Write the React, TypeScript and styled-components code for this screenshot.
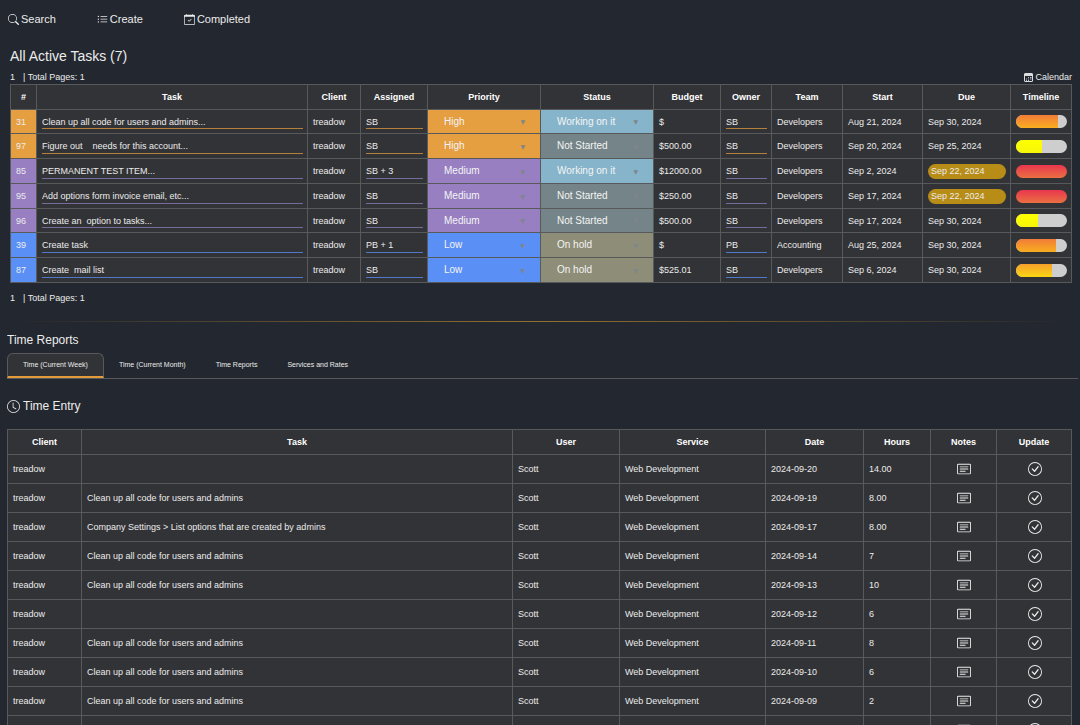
import React from "react";
import styled, { createGlobalStyle } from "styled-components";
import {
  BsCalendarCheck,
  BsCardText,
  BsCheckCircle,
  BsClock,
  BsListUl,
  BsSearch,
} from "react-icons/bs";

const color = {
  page: "#23272f",
  cell: "#323336",
  line: "#58595b",
  text: "#ececec",
  accent: "#e39b3b",
};

const tones = {
  high: { fill: "#e59e40", rule: "#b5813a" },
  medium: { fill: "#977fc1", rule: "#776b9c" },
  low: { fill: "#5a8ff5", rule: "#5078c8" },
};

const statusFill: Record<string, string> = {
  "Working on it": "#86b4cb",
  "Not Started": "#758488",
  "On hold": "#8d8d78",
};

const GlobalStyle = createGlobalStyle`
  *, *::before, *::after { box-sizing: border-box; }
  body {
    margin: 0;
    background: ${color.page};
    color: ${color.text};
    font: 9px/12px "Liberation Sans", Arial, sans-serif;
  }
  button, input, select { font: inherit; color: inherit; }
`;

const Toolbar = styled.nav`
  display: flex;
  gap: 41px;
  padding: 12px 8px;
`;

const ToolButton = styled.button`
  display: flex;
  align-items: center;
  gap: 2px;
  padding: 0;
  border: 0;
  background: none;
  font-size: 11px;
  line-height: 15px;
  svg { width: 11px; height: 11px; }
`;

const TasksSection = styled.section`
  padding: 8px 8px 0 10px;
`;

const PageTitle = styled.h1`
  margin: 0;
  font-size: 14px;
  font-weight: 400;
  line-height: 18px;
`;

const TableMeta = styled.div`
  display: flex;
  justify-content: space-between;
  padding: 6px 0 1px;
`;

const Pager = styled.div`
  display: flex;
  gap: 8px;
`;

const CalendarLink = styled.a`
  display: flex;
  align-items: center;
  gap: 2px;
  color: inherit;
  text-decoration: none;
  svg { width: 9px; height: 9px; }
`;

const FooterPager = styled(Pager)`
  padding-top: 9px;
`;

const Table = styled.table`
  width: 100%;
  table-layout: fixed;
  border-collapse: collapse;
  background: ${color.cell};
`;

const Column = styled.col<{ $width?: number }>`
  width: ${(p) => (p.$width ? `${p.$width}px` : "auto")};
`;

const HeadCell = styled.th`
  height: 25px;
  padding: 0;
  border: 1px solid ${color.line};
  color: #fff;
  font-weight: 700;
`;

const Cell = styled.td<{ $fill?: string; $flush?: boolean; $center?: boolean }>`
  padding: ${(p) => (p.$flush ? "0" : "0 4px 0 5px")};
  border: 1px solid ${color.line};
  background: ${(p) => p.$fill ?? "transparent"};
  text-align: ${(p) => (p.$center ? "center" : "left")};
  white-space: nowrap;
`;

const TaskRow = styled.tr`
  height: 25px;
  &:nth-child(4n + 1) { height: 24px; }
`;

const EntryRow = styled.tr`
  height: 29px;
`;

const LineInput = styled.input<{ $rule: string }>`
  display: block;
  width: 100%;
  height: 15px;
  padding: 1px 0 0;
  border: 0;
  border-bottom: 1px solid ${(p) => p.$rule};
  border-radius: 0;
  background: none;
  outline: none;
`;

const SelectBox = styled.div`
  position: relative;
  &::after {
    content: "▼";
    position: absolute;
    top: 0;
    right: 15px;
    color: #7f858c;
    font: 6px/24px "DejaVu Sans", sans-serif;
    pointer-events: none;
  }
`;

const Select = styled.select`
  display: block;
  width: 100%;
  height: 23px;
  padding: 0 16px;
  border: 0;
  background: none;
  color: #f4f4f4;
  font-size: 10px;
  appearance: none;
  option { background: ${color.cell}; }
`;

const DueTag = styled.span`
  display: block;
  padding: 0 3px;
  border-radius: 8px;
  background: #b78c17;
  line-height: 15px;
`;

const Track = styled.div`
  height: 13px;
  border-radius: 7px;
  overflow: hidden;
  background: #cecece;
`;

const Fill = styled.div<{ $from: string; $to: string }>`
  height: 100%;
  background: linear-gradient(${(p) => p.$from}, ${(p) => p.$to});
`;

const Divider = styled.hr`
  height: 1px;
  margin: 17px 8px 0;
  border: 0;
  background: linear-gradient(90deg, transparent, #94702f, transparent);
`;

const ReportsSection = styled.section`
  padding: 10px 2px 0 7px;
`;

const SectionTitle = styled.h2`
  display: flex;
  align-items: center;
  gap: 3px;
  margin: 0;
  font-size: 12px;
  font-weight: 400;
  line-height: 16px;
  svg { width: 13px; height: 13px; }
`;

const TabList = styled.div`
  display: flex;
  margin-top: 5px;
  border-bottom: 1px solid ${color.line};
`;

const Tab = styled.button<{ $active?: boolean }>`
  height: 25px;
  padding: ${(p) => (p.$active ? "0 15px" : "0 14px 2px")};
  border: 1px solid ${(p) => (p.$active ? color.line : "transparent")};
  border-bottom: ${(p) => (p.$active ? `2px solid ${color.accent}` : "0")};
  border-radius: 6px 6px 0 0;
  background: ${(p) => (p.$active ? color.cell : "none")};
  font-size: 7px;
`;

const EntryPanel = styled.div`
  padding: 19px 6px 0 0;
`;

const EntryTable = styled(Table)`
  margin-top: 15px;
`;

const IconButton = styled.button`
  display: inline-flex;
  padding: 0;
  border: 0;
  background: none;
  vertical-align: middle;
  svg { width: 14px; height: 14px; }
`;

type Tone = keyof typeof tones;

interface Task {
  id: number;
  name: string;
  assigned: string;
  priority: string;
  tone: Tone;
  status: string;
  budget: string;
  owner: string;
  team: string;
  start: string;
  due: string;
  late?: boolean;
  progress: number;
  ramp: [string, string];
}

const orange: [string, string] = ["#f27c38", "#f8ae20"];
const amber: [string, string] = ["#f5a02a", "#fcd714"];
const yellow: [string, string] = ["#ffff00", "#f6f60a"];
const red: [string, string] = ["#e9364f", "#ea7041"];

const tasks: Task[] = [
  { id: 31, name: "Clean up all code for users and admins...", assigned: "SB", priority: "High", tone: "high", status: "Working on it", budget: "$", owner: "SB", team: "Developers", start: "Aug 21, 2024", due: "Sep 30, 2024", progress: 82, ramp: orange },
  { id: 97, name: "Figure out    needs for this account...", assigned: "SB", priority: "High", tone: "high", status: "Not Started", budget: "$500.00", owner: "SB", team: "Developers", start: "Sep 20, 2024", due: "Sep 25, 2024", progress: 50, ramp: yellow },
  { id: 85, name: "PERMANENT TEST ITEM...", assigned: "SB + 3", priority: "Medium", tone: "medium", status: "Working on it", budget: "$12000.00", owner: "SB", team: "Developers", start: "Sep 2, 2024", due: "Sep 22, 2024", late: true, progress: 100, ramp: red },
  { id: 95, name: "Add options form invoice email, etc...", assigned: "SB", priority: "Medium", tone: "medium", status: "Not Started", budget: "$250.00", owner: "SB", team: "Developers", start: "Sep 17, 2024", due: "Sep 22, 2024", late: true, progress: 100, ramp: red },
  { id: 96, name: "Create an  option to tasks...", assigned: "SB", priority: "Medium", tone: "medium", status: "Not Started", budget: "$500.00", owner: "SB", team: "Developers", start: "Sep 17, 2024", due: "Sep 30, 2024", progress: 43, ramp: yellow },
  { id: 39, name: "Create task", assigned: "PB + 1", priority: "Low", tone: "low", status: "On hold", budget: "$", owner: "PB", team: "Accounting", start: "Aug 25, 2024", due: "Sep 30, 2024", progress: 79, ramp: orange },
  { id: 87, name: "Create  mail list", assigned: "SB", priority: "Low", tone: "low", status: "On hold", budget: "$525.01", owner: "SB", team: "Developers", start: "Sep 6, 2024", due: "Sep 30, 2024", progress: 70, ramp: amber },
];

const cleanUp = "Clean up all code for users and admins";

const entries = [
  { task: "", date: "2024-09-20", hours: "14.00" },
  { task: cleanUp, date: "2024-09-19", hours: "8.00" },
  { task: "Company Settings > List options that are created by admins", date: "2024-09-17", hours: "8.00" },
  { task: cleanUp, date: "2024-09-14", hours: "7" },
  { task: cleanUp, date: "2024-09-13", hours: "10" },
  { task: "", date: "2024-09-12", hours: "6" },
  { task: cleanUp, date: "2024-09-11", hours: "8" },
  { task: cleanUp, date: "2024-09-10", hours: "6" },
  { task: cleanUp, date: "2024-09-09", hours: "2" },
];

const taskColumns: [string, number?][] = [
  ["#", 26], ["Task"], ["Client", 53], ["Assigned", 67], ["Priority", 113], ["Status", 113],
  ["Budget", 67], ["Owner", 51], ["Team", 71], ["Start", 80], ["Due", 88], ["Timeline", 61],
];

const entryColumns: [string, number?][] = [
  ["Client", 74], ["Task"], ["User", 107], ["Service", 146], ["Date", 98], ["Hours", 67], ["Notes", 66], ["Update", 75],
];

function CalendarIcon() {
  return (
    <svg viewBox="0 0 18 18" fill="none" aria-hidden="true">
      <rect x="1" y="1" width="16" height="16" rx="1" stroke="#dcdcdc" strokeWidth="2" />
      <path d="M1 4h16" stroke="#dcdcdc" strokeWidth="4" />
      <path d="M8 9h2M12 9h3M4 12h2M8 12h2M12 12h3M4 15h2M8 15h2" stroke="#b9bcc6" strokeWidth="2" />
    </svg>
  );
}

function TableHead({ columns }: { columns: [string, number?][] }) {
  return (
    <>
      <colgroup>
        {columns.map(([label, width]) => (
          <Column key={label} $width={width} />
        ))}
      </colgroup>
      <thead>
        <tr>
          {columns.map(([label]) => (
            <HeadCell key={label} scope="col">{label}</HeadCell>
          ))}
        </tr>
      </thead>
    </>
  );
}

function Choice({ label, value, options }: { label: string; value: string; options: string[] }) {
  return (
    <SelectBox>
      <Select aria-label={label} defaultValue={value}>
        {options.map((option) => (
          <option key={option}>{option}</option>
        ))}
      </Select>
    </SelectBox>
  );
}

function TaskLine({ task }: { task: Task }) {
  const { fill, rule } = tones[task.tone];
  return (
    <TaskRow>
      <Cell $fill={fill}>{task.id}</Cell>
      <Cell><LineInput $rule={rule} aria-label={`Task ${task.id}`} defaultValue={task.name} /></Cell>
      <Cell>treadow</Cell>
      <Cell><LineInput $rule={rule} aria-label={`Assigned to task ${task.id}`} defaultValue={task.assigned} /></Cell>
      <Cell $fill={fill} $flush>
        <Choice label={`Priority of task ${task.id}`} value={task.priority} options={["High", "Medium", "Low"]} />
      </Cell>
      <Cell $fill={statusFill[task.status]} $flush>
        <Choice label={`Status of task ${task.id}`} value={task.status} options={Object.keys(statusFill)} />
      </Cell>
      <Cell>{task.budget}</Cell>
      <Cell><LineInput $rule={rule} aria-label={`Owner of task ${task.id}`} defaultValue={task.owner} /></Cell>
      <Cell>{task.team}</Cell>
      <Cell>{task.start}</Cell>
      <Cell>{task.late ? <DueTag>{task.due}</DueTag> : task.due}</Cell>
      <Cell>
        <Track role="progressbar" aria-label={`Timeline of task ${task.id}`} aria-valuenow={task.progress}>
          <Fill $from={task.ramp[0]} $to={task.ramp[1]} style={{ width: `${task.progress}%` }} />
        </Track>
      </Cell>
    </TaskRow>
  );
}

export default function App() {
  return (
    <>
      <GlobalStyle />
      <Toolbar>
        <ToolButton type="button"><BsSearch />Search</ToolButton>
        <ToolButton type="button"><BsListUl />Create</ToolButton>
        <ToolButton type="button"><BsCalendarCheck />Completed</ToolButton>
      </Toolbar>
      <main>
        <TasksSection>
          <PageTitle>All Active Tasks (7)</PageTitle>
          <TableMeta>
            <Pager><span>1</span><span>| Total Pages: 1</span></Pager>
            <CalendarLink href="#calendar"><CalendarIcon />Calendar</CalendarLink>
          </TableMeta>
          <Table>
            <TableHead columns={taskColumns} />
            <tbody>
              {tasks.map((task) => (
                <TaskLine key={task.id} task={task} />
              ))}
            </tbody>
          </Table>
          <FooterPager><span>1</span><span>| Total Pages: 1</span></FooterPager>
        </TasksSection>
        <Divider />
        <ReportsSection>
          <SectionTitle>Time Reports</SectionTitle>
          <TabList role="tablist">
            <Tab type="button" role="tab" aria-selected $active>Time (Current Week)</Tab>
            <Tab type="button" role="tab">Time (Current Month)</Tab>
            <Tab type="button" role="tab">Time Reports</Tab>
            <Tab type="button" role="tab">Services and Rates</Tab>
          </TabList>
          <EntryPanel>
            <SectionTitle><BsClock />Time Entry</SectionTitle>
            <EntryTable>
              <TableHead columns={entryColumns} />
              <tbody>
                {[...entries, { task: "", date: "", hours: "" }].map((entry, index) => (
                  <EntryRow key={index}>
                    <Cell>{entry.date && "treadow"}</Cell>
                    <Cell>{entry.task}</Cell>
                    <Cell>{entry.date && "Scott"}</Cell>
                    <Cell>{entry.date && "Web Development"}</Cell>
                    <Cell>{entry.date}</Cell>
                    <Cell>{entry.hours}</Cell>
                    <Cell $center><IconButton type="button" aria-label="Notes"><BsCardText /></IconButton></Cell>
                    <Cell $center><IconButton type="button" aria-label="Update"><BsCheckCircle /></IconButton></Cell>
                  </EntryRow>
                ))}
              </tbody>
            </EntryTable>
          </EntryPanel>
        </ReportsSection>
      </main>
    </>
  );
}
